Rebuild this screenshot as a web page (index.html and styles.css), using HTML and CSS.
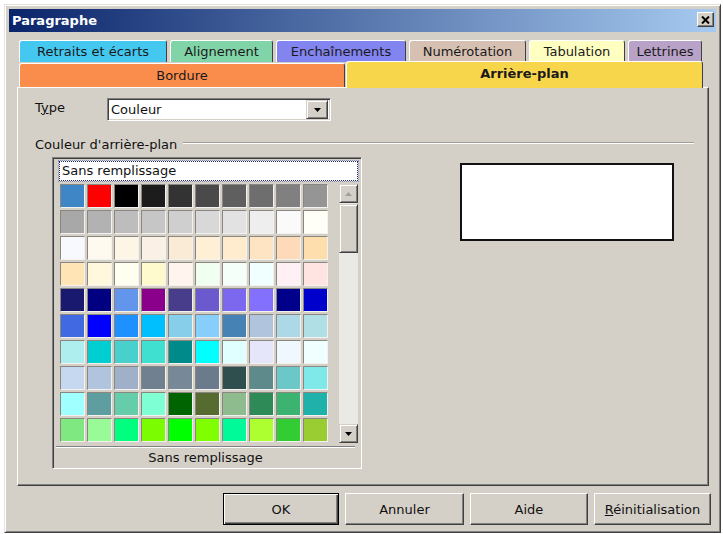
FILE: index.html
```html
<!DOCTYPE html>
<html lang="fr">
<head>
    <meta charset="UTF-8">
    <title>Paragraphe</title>
    <link rel="stylesheet" href="styles.css">
</head>
<body>

<div class="window">
    <div class="titlebar">
        <span class="title">Paragraphe</span>
        <span class="close-btn">
            <svg width="9" height="8" viewBox="0 0 9 8">
                <path d="M1 0.5 L8 7.5 M8 0.5 L1 7.5" stroke="#000" stroke-width="2"/>
            </svg>
        </span>
    </div>

    <div class="tabs">
        <div class="tab-row">
            <div class="tab tab-retraits">Retraits et écarts</div>
            <div class="tab tab-alignement">Alignement</div>
            <div class="tab tab-enchainements">Enchaînements</div>
            <div class="tab tab-numerotation">Numérotation</div>
            <div class="tab tab-tabulation">Tabulation</div>
            <div class="tab tab-lettrines">Lettrines</div>
        </div>
        <div class="tab-row tab-row-front">
            <div class="tab tab-bordure">Bordure</div>
            <div class="tab tab-fond active">Arrière-plan</div>
        </div>
    </div>

    <div class="panel">
        <div class="type-row">
            <span class="type-label">T<u>y</u>pe</span>
            <div class="combo">
                <span class="combo-text">Couleur</span>
                <span class="combo-btn">
                    <svg width="7" height="4" viewBox="0 0 7 4"><polygon points="0,0 7,0 3.5,4" fill="#000"/></svg>
                </span>
            </div>
        </div>

        <div class="group-head">
            <span>Couleur d'arrière-plan</span>
            <span class="rule"></span>
        </div>

        <div class="group-body">
            <div class="colorbox">
                <div class="none-item">Sans remplissage</div>
                <div class="colorbox-main">
                    <div class="swatches" id="swatches"></div>
                    <div class="scrollbar">
                        <div class="sb-btn">
                            <svg width="7" height="4" viewBox="0 0 7 4"><polygon points="0,4 7,4 3.5,0" fill="#a0a0a0"/></svg>
                        </div>
                        <div class="sb-thumb"></div>
                        <div class="sb-btn sb-down">
                            <svg width="7" height="4" viewBox="0 0 7 4"><polygon points="0,0 7,0 3.5,4" fill="#000"/></svg>
                        </div>
                    </div>
                </div>
                <div class="colorbox-foot">Sans remplissage</div>
            </div>
            <div class="preview"></div>
        </div>
    </div>

    <div class="buttons">
        <button class="btn btn-default btn-ok">OK</button>
        <button class="btn btn-annuler">Annuler</button>
        <button class="btn btn-aide">Aide</button>
        <button class="btn btn-reset"><u>R</u>éinitialisation</button>
    </div>
</div>

<script>
    // palette shown in the list, row by row (10 per row)
    const colors = [
        "#3e86c6", "#ff0000", "#000000", "#1c1c1c", "#333333", "#4a4a4a", "#5f5f5f", "#6e6e6e", "#808080", "#959595",
        "#a8a8a8", "#b2b2b2", "#bdbdbd", "#c6c6c6", "#cfcfcf", "#d8d8d8", "#e2e2e2", "#eeeeee", "#fafafa", "#fffff8",
        "#f8f8ff", "#fffaf0", "#fdf5e6", "#faf0e6", "#faebd7", "#ffefd5", "#ffebcd", "#ffe4c4", "#ffdab9", "#ffdead",
        "#ffe4b5", "#fff8dc", "#fffff0", "#fffacd", "#fff5ee", "#f0fff0", "#f5fffa", "#f0ffff", "#fff0f5", "#ffe4e1",
        "#191970", "#000080", "#6495ed", "#8b008b", "#483d8b", "#6a5acd", "#7b68ee", "#8470ff", "#00008b", "#0000cd",
        "#4169e1", "#0000ff", "#1e90ff", "#00bfff", "#87ceeb", "#87cefa", "#4682b4", "#b0c4de", "#add8e6", "#b0e0e6",
        "#afeeee", "#00ced1", "#48d1cc", "#40e0d0", "#008b8b", "#00ffff", "#e0ffff", "#e6e6fa", "#f0f8ff", "#f0ffff",
        "#c6d8f0", "#b0c4de", "#a0b0c8", "#708090", "#778899", "#6c7b8b", "#2f4f4f", "#5f8a8b", "#6cc8c8", "#7fe8e8",
        "#a0ffff", "#5f9ea0", "#66cdaa", "#7fffd4", "#006400", "#556b2f", "#8fbc8f", "#2e8b57", "#3cb371", "#20b2aa",
        "#80e880", "#98fb98", "#00ff7f", "#7cfc00", "#00ff00", "#7fff00", "#00fa9a", "#adff2f", "#32cd32", "#9acd32"
    ];

    const grid = document.getElementById("swatches");
    colors.forEach(function (c) {
        const cell = document.createElement("div");
        cell.className = "swatch";
        cell.style.background = c;
        grid.appendChild(cell);
    });
</script>

</body>
</html>
```

FILE: styles.css
```css
body {
    margin: 0;
    background: #fff;
    font-family: "DejaVu Sans", sans-serif;
    font-size: 13px;
    color: #111;
}

/* dialog frame */
.window {
    margin: 4px 0 0 4px;
    width: 717px;
    height: 529px;
    box-sizing: border-box;
    padding: 4px;
    background: #d4d0c8;
    border: 1px solid;
    border-color: #e4e2dc #404040 #404040 #e4e2dc;
    box-shadow: inset 1px 1px #fff, inset -1px -1px #808080;
    display: flex;
    flex-direction: column;
}

.titlebar {
    height: 23px;
    display: flex;
    align-items: center;
    justify-content: space-between;
    padding: 0 2px 0 3px;
    background: linear-gradient(to right, #0a246a, #a6caf0);
}
.title {
    color: #fff;
    font-weight: bold;
    font-size: 13px;
}
.close-btn {
    width: 17px;
    height: 15px;
    box-sizing: border-box;
    display: flex;
    align-items: center;
    justify-content: center;
    background: #d4d0c8;
    border: 1px solid;
    border-color: #fff #404040 #404040 #fff;
    box-shadow: inset -1px -1px #808080;
    margin-top: -2px;
}

/* tabs */
.tabs {
    margin-top: 8px;
    padding-left: 10px;
}
.tab-row {
    display: flex;
    gap: 3px;
    height: 22px;
}
.tab-row-front {
    gap: 1px;
    height: 24px;
    margin-top: 1px;
}
.tab {
    box-sizing: border-box;
    height: 100%;
    border-top: 1px solid #fff;
    border-left: 1px solid #fff;
    border-right: 1px solid #404040;
    border-radius: 3px 3px 0 0;
    text-align: center;
    line-height: 21px;
    color: #1a1a1a;
}
.tab-retraits { width: 148px; background: #44c8f0; }
.tab-alignement { width: 103px; background: #80d4a8; }
.tab-enchainements { width: 130px; background: #8284f0; }
.tab-numerotation { width: 117px; background: #d6c0b2; }
.tab-tabulation { width: 96px; background: #ffffc2; }
.tab-lettrines { width: 74px; background: #b8a2c8; }
.tab-bordure { width: 326px; background: #fa8c4c; line-height: 23px; }
.tab-fond { width: 357px; background: #f8d64c; }
.tab.active {
    height: 27px;
    margin-top: -2px;
    font-weight: bold;
    line-height: 24px;
    position: relative;
    z-index: 1;
}

/* page */
.panel {
    margin-left: 8px;
    width: 692px;
    height: 399px;
    box-sizing: border-box;
    border: 1px solid;
    border-color: #fff #404040 #404040 #fff;
    box-shadow: inset -1px -1px #808080;
}

.type-row {
    display: flex;
    align-items: center;
    margin-top: 10px;
    padding-left: 17px;
}
.type-label {
    width: 72px;
    margin-top: -5px;
}
.combo {
    width: 224px;
    height: 23px;
    box-sizing: border-box;
    display: flex;
    align-items: center;
    justify-content: space-between;
    background: #fff;
    border: 1px solid;
    border-color: #808080 #fff #fff #808080;
    box-shadow: inset 1px 1px #404040, inset -1px -1px #d4d0c8;
    padding: 2px 2px 2px 3px;
}
.combo-btn {
    width: 22px;
    height: 19px;
    box-sizing: border-box;
    display: flex;
    align-items: center;
    justify-content: center;
    background: #d4d0c8;
    border: 1px solid;
    border-color: #d4d0c8 #404040 #404040 #d4d0c8;
    box-shadow: inset 1px 1px #fff, inset -1px -1px #808080;
}

.group-head {
    display: flex;
    align-items: center;
    margin-top: 15px;
    padding-left: 17px;
    height: 16px;
}
.rule {
    flex: 1;
    margin: -3px 14px 0 6px;
    border-top: 1px solid #a09c94;
    border-bottom: 1px solid #fff;
}

.group-body {
    display: flex;
    align-items: flex-start;
    margin-top: 5px;
    padding-left: 34px;
}

/* colour list */
.colorbox {
    width: 310px;
    height: 312px;
    box-sizing: border-box;
    padding: 3px 3px 0 6px;
    background: #d4d0c8;
    border: 1px solid;
    border-color: #808080 #fff #fff #808080;
    box-shadow: inset 1px 1px #404040, inset -1px -1px #d4d0c8;
}
.none-item {
    height: 20px;
    box-sizing: border-box;
    background: #fff;
    border: 1px dotted #1a2a6a;
    outline: 1px dotted #8890b8;
    padding-left: 2px;
    line-height: 17px;
}
.colorbox-main {
    display: flex;
    margin-top: 3px;
}
.swatches {
    display: grid;
    grid-template-columns: repeat(10, 25px);
    grid-auto-rows: 24px;
    gap: 2px;
    margin-left: 1px;
}
.swatch {
    border: 1px solid;
    border-color: #8a8680 #f4f2ee #f4f2ee #8a8680;
}

.scrollbar {
    width: 20px;
    height: 259px;
    margin-left: 11px;
    display: flex;
    flex-direction: column;
    background: #ebe9e5;
}
.sb-btn, .sb-thumb {
    box-sizing: border-box;
    background: #d4d0c8;
    border: 1px solid;
    border-color: #d4d0c8 #404040 #404040 #d4d0c8;
    box-shadow: inset 1px 1px #fff, inset -1px -1px #808080;
}
.sb-btn {
    height: 19px;
    display: flex;
    align-items: center;
    justify-content: center;
}
.sb-thumb {
    height: 49px;
    margin-top: 1px;
}
.sb-down {
    margin-top: auto;
}

.colorbox-foot {
    margin: 3px 3px 0 -3px;
    height: 22px;
    border-top: 1px solid #808080;
    box-shadow: inset 0 1px #fff;
    text-align: center;
    line-height: 22px;
}

.preview {
    margin: 6px 0 0 98px;
    width: 214px;
    height: 78px;
    box-sizing: border-box;
    background: #fff;
    border: 2px solid #111;
}

/* bottom buttons */
.buttons {
    display: flex;
    justify-content: flex-end;
    gap: 6px;
    margin-top: 7px;
    padding-right: 5px;
}
.btn {
    height: 32px;
    box-sizing: border-box;
    background: #d4d0c8;
    border: 1px solid;
    border-color: #fff #404040 #404040 #fff;
    box-shadow: inset -1px -1px #808080;
    font-family: "DejaVu Sans", sans-serif;
    font-size: 13px;
    color: #111;
    padding: 0;
}
.btn-default {
    border-color: #000;
    box-shadow: inset 1px 1px #fff, inset -1px -1px #404040, inset -2px -2px #808080;
}
.btn-ok { width: 116px; }
.btn-annuler { width: 119px; }
.btn-aide { width: 118px; }
.btn-reset { width: 117px; }
```
